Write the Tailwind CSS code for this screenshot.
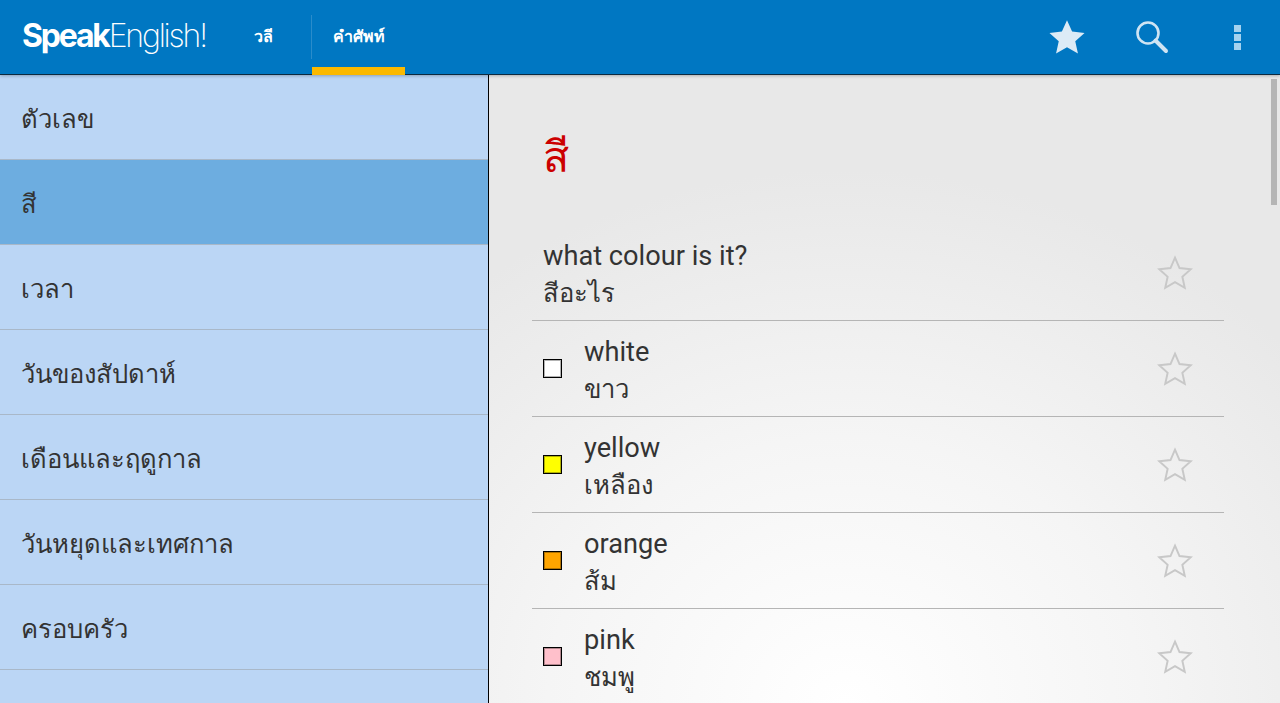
<!DOCTYPE html>
<html lang="en">
<head>
    <meta charset="UTF-8">
    <title>SpeakEnglish</title>
    <script src="https://cdn.jsdelivr.net/npm/@tailwindcss/browser@4"></script>
</head>
<body class="h-[703px] w-[1280px] overflow-hidden font-['Roboto','Noto_Sans','DejaVu_Sans',sans-serif]">

    <!-- Action bar -->
    <header class="relative z-10 h-[75px] bg-[#0077c2] border-b border-[#0c2a40] flex items-stretch shadow-[0_1px_3px_rgba(0,0,0,0.25)]">
        <div class="w-[254px] pl-[22px] flex items-center pb-[3px] text-white text-[32px] tracking-[-2.2px] font-['Inter',sans-serif]">
            <span class="font-bold">Speak</span><span class="font-extralight">English!</span>
        </div>
        <div class="w-[57px] flex items-center text-white text-[16px] font-bold">วลี</div>
        <div class="w-px my-[15px] bg-[#2a8ccb]"></div>
        <div class="w-[93px] relative flex items-center justify-center text-white text-[16px] font-bold">
            คำศัพท์
            <div class="absolute left-0 right-0 -bottom-px h-2 bg-[#fbb900]"></div>
        </div>
        <div class="ml-auto flex items-center">
            <svg class="w-[38px] h-[36px] mr-[48px] ml-[2px]" viewBox="0 0 24 24" fill="#dcebf6"><path d="M12 .8l3.4 7.6 8.3.9-6.2 5.5 1.8 8.2L12 18.8l-7.3 4.2 1.8-8.2L.3 9.3l8.3-.9z"/></svg>
            <svg class="w-[36px] h-[36px] mr-[64px] -mt-[1px]" viewBox="0 0 36 36" fill="none" stroke="#cfe4f3"><circle cx="14" cy="14" r="10.5" stroke-width="2.6"/><path d="M21.5 21.5L32 32" stroke-width="4" stroke-linecap="round"/></svg>
            <div class="flex flex-col gap-[2px] mr-[39px]">
                <div class="w-[7px] h-[7px] bg-[#a5d2ef]"></div>
                <div class="w-[7px] h-[7px] bg-[#a5d2ef]"></div>
                <div class="w-[7px] h-[7px] bg-[#a5d2ef]"></div>
            </div>
        </div>
    </header>

    <div class="flex h-[628px]">
        <!-- Category list -->
        <nav class="w-[488px] bg-[#bbd6f5] text-[#333] text-[25.6px] overflow-hidden">
            <div class="h-[85px] pl-[21px] pt-[5px] flex items-center border-b border-[#a9b8c8]">ตัวเลข</div>
            <div class="h-[85px] pl-[21px] pt-[5px] flex items-center border-b border-[#a9b8c8] bg-[#6dade0]">สี</div>
            <div class="h-[85px] pl-[21px] pt-[5px] flex items-center border-b border-[#a9b8c8]">เวลา</div>
            <div class="h-[85px] pl-[21px] pt-[5px] flex items-center border-b border-[#a9b8c8]">วันของสัปดาห์</div>
            <div class="h-[85px] pl-[21px] pt-[5px] flex items-center border-b border-[#a9b8c8]">เดือนและฤดูกาล</div>
            <div class="h-[85px] pl-[21px] pt-[5px] flex items-center border-b border-[#a9b8c8]">วันหยุดและเทศกาล</div>
            <div class="h-[85px] pl-[21px] pt-[5px] flex items-center border-b border-[#a9b8c8]">ครอบครัว</div>
        </nav>

        <!-- Phrase list -->
        <main class="relative flex-1 border-l border-black overflow-hidden bg-[radial-gradient(ellipse_75%_85%_at_45%_100%,#ffffff_0%,#f5f5f5_50%,#e8e8e8_100%)] pl-[43px] pr-[56px] text-[#333] text-[27.2px] leading-[37px]">
            <h1 class="text-[#cc0000] text-[43px] leading-[48px] pl-[11px] pt-[58px] h-[161px]">สี</h1>

            <div class="h-[85px] flex items-center pl-[11px] border-b border-[#b5b5b5]">
                <div class="flex-1 -mt-[7px]">
                    <div>what colour is it?</div>
                    <div class="text-[25.6px]">สีอะไร</div>
                </div>
                <svg class="w-[36px] h-[36px] mr-[31px] -mt-[11px]" viewBox="0 0 24 24" fill="none" stroke="#c8c8c8" stroke-width="1.3"><path d="M12 1.8l3 6.9 7.5.8-5.6 5 1.6 7.4L12 18.1l-6.5 3.8 1.6-7.4-5.6-5 7.5-.8z"/></svg>
            </div>

            <div class="h-[96px] flex items-center pl-[11px] border-b border-[#b5b5b5]">
                <div class="w-[19px] h-[19px] bg-white border border-black shadow-[inset_0_0_0_1px_rgba(0,0,0,0.3)] mr-[22px]"></div>
                <div class="flex-1 mt-[5px]">
                    <div>white</div>
                    <div class="text-[25.6px]">ขาว</div>
                </div>
                <svg class="w-[36px] h-[36px] mr-[31px]" viewBox="0 0 24 24" fill="none" stroke="#c8c8c8" stroke-width="1.3"><path d="M12 1.8l3 6.9 7.5.8-5.6 5 1.6 7.4L12 18.1l-6.5 3.8 1.6-7.4-5.6-5 7.5-.8z"/></svg>
            </div>

            <div class="h-[96px] flex items-center pl-[11px] border-b border-[#b5b5b5]">
                <div class="w-[19px] h-[19px] bg-[#ffff00] border border-black shadow-[inset_0_0_0_1px_rgba(0,0,0,0.3)] mr-[22px]"></div>
                <div class="flex-1 mt-[5px]">
                    <div>yellow</div>
                    <div class="text-[25.6px]">เหลือง</div>
                </div>
                <svg class="w-[36px] h-[36px] mr-[31px]" viewBox="0 0 24 24" fill="none" stroke="#c8c8c8" stroke-width="1.3"><path d="M12 1.8l3 6.9 7.5.8-5.6 5 1.6 7.4L12 18.1l-6.5 3.8 1.6-7.4-5.6-5 7.5-.8z"/></svg>
            </div>

            <div class="h-[96px] flex items-center pl-[11px] border-b border-[#b5b5b5]">
                <div class="w-[19px] h-[19px] bg-[#ffa500] border border-black shadow-[inset_0_0_0_1px_rgba(0,0,0,0.3)] mr-[22px]"></div>
                <div class="flex-1 mt-[5px]">
                    <div>orange</div>
                    <div class="text-[25.6px]">ส้ม</div>
                </div>
                <svg class="w-[36px] h-[36px] mr-[31px]" viewBox="0 0 24 24" fill="none" stroke="#c8c8c8" stroke-width="1.3"><path d="M12 1.8l3 6.9 7.5.8-5.6 5 1.6 7.4L12 18.1l-6.5 3.8 1.6-7.4-5.6-5 7.5-.8z"/></svg>
            </div>

            <div class="h-[96px] flex items-center pl-[11px]">
                <div class="w-[19px] h-[19px] bg-[#ffc0cb] border border-black shadow-[inset_0_0_0_1px_rgba(0,0,0,0.3)] mr-[22px] -mt-[2px]"></div>
                <div class="flex-1 mt-[3px]">
                    <div>pink</div>
                    <div class="text-[25.6px]">ชมพู</div>
                </div>
                <svg class="w-[36px] h-[36px] mr-[31px]" viewBox="0 0 24 24" fill="none" stroke="#c8c8c8" stroke-width="1.3"><path d="M12 1.8l3 6.9 7.5.8-5.6 5 1.6 7.4L12 18.1l-6.5 3.8 1.6-7.4-5.6-5 7.5-.8z"/></svg>
            </div>

            <!-- Scrollbar thumb -->
            <div class="absolute top-[4px] right-[3px] w-[6px] h-[126px] bg-[#b5b5b5]"></div>
        </main>
    </div>

</body>
</html>
